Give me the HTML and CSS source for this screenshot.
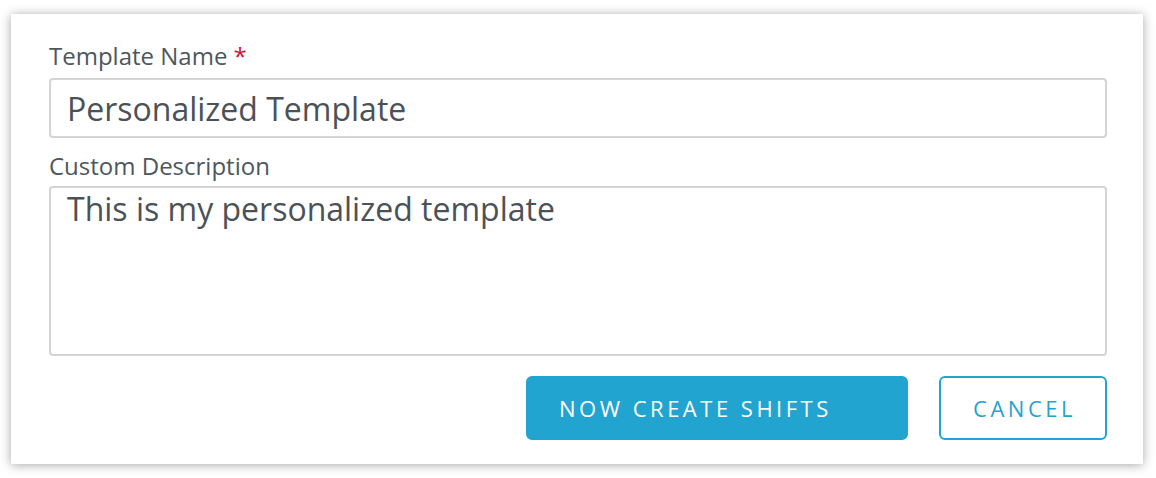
FILE: index.html
```html
<!DOCTYPE html>
<html lang="en">
<head>
<meta charset="utf-8">
<title>Template</title>
<link rel="stylesheet" href="styles.css">
</head>
<body>
<div class="card">
  <form class="form">
    <div class="field">
      <label class="label" for="tname">Template Name <span class="req">*</span></label>
      <input class="input" id="tname" type="text" value="Personalized Template">
    </div>
    <div class="field">
      <label class="label" for="tdesc">Custom Description</label>
      <textarea class="input textarea" id="tdesc">This is my personalized template</textarea>
    </div>
    <div class="actions">
      <button type="button" class="btn btn-primary">NOW CREATE SHIFTS</button>
      <button type="button" class="btn btn-outline">CANCEL</button>
    </div>
  </form>
</div>
</body>
</html>
```

FILE: styles.css
```css
html, body {
  margin: 0;
  padding: 0;
  background: #ffffff;
}

body {
  font-family: "Open Sans", "Liberation Sans", sans-serif;
  color: #4a5257;
  padding: 14px 13px 14px 11px;
}

.card {
  width: 1132px;
  height: 450px;
  box-sizing: border-box;
  background: #fff;
  box-shadow: 0 1px 10px rgba(0, 0, 0, 0.35);
  padding: 27px 36px 0 38px;
}

.form {
  display: flex;
  flex-direction: column;
}

.field {
  display: flex;
  flex-direction: column;
}

.label {
  font-size: 24px;
  line-height: 30px;
  color: #4d575c;
  margin-bottom: 7px;
}

.field + .field .label {
  margin-top: 13px;
  margin-bottom: 5px;
}

.req {
  color: #d0103a;
}

.input {
  box-sizing: border-box;
  width: 1058px;
  height: 60px;
  border: 2px solid #d4d4d4;
  border-radius: 4px;
  padding: 0 16px;
  font-family: "Open Sans", "Liberation Sans", sans-serif;
  font-size: 32px;
  color: #4a5257;
  background: #fff;
  outline: none;
}

.textarea {
  height: 170px;
  padding: 1px 16px 0;
  resize: none;
  line-height: 40px;
  display: block;
}

.actions {
  display: flex;
  justify-content: flex-end;
  gap: 31px;
  margin-top: 20px;
  width: 1058px;
}

.btn {
  height: 64px;
  box-sizing: border-box;
  border-radius: 6px;
  font-family: "Open Sans", "Liberation Sans", sans-serif;
  font-size: 22px;
  letter-spacing: 3.5px;
  cursor: pointer;
  display: flex;
  align-items: center;
}

.btn-primary {
  width: 382px;
  background: #22a4d0;
  border: 2px solid #22a4d0;
  color: #ffffff;
  justify-content: flex-start;
  padding: 0 0 0 31px;
}

.btn-outline {
  width: 168px;
  background: #ffffff;
  border: 2px solid #22a4d0;
  color: #22a4d0;
  justify-content: center;
  padding: 0 0 0 3px;
}
```
